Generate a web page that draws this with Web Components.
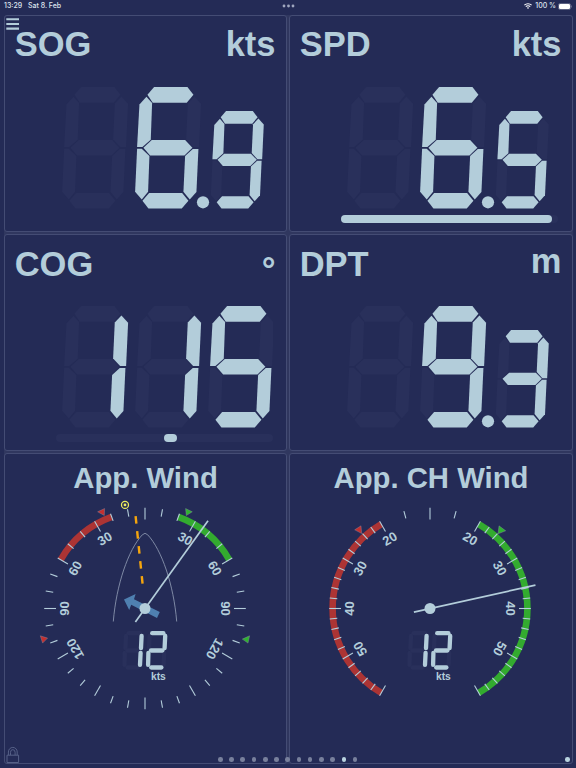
<!DOCTYPE html>
<html lang="en">
<head>
<meta charset="utf-8">
<title>Instruments</title>
<style>
    body {
        margin: 0;
        background: #242b56;
        font-family: "Liberation Sans", Arial, sans-serif;
        color: #b3cdda;
    }

    .lower { --label-top: 10px; }
</style>
</head>
<body>
<instrument-page>
    <status-bar slot="status" time="13:29" date="Sat 8. Feb" battery="100 %"></status-bar>
    <number-cell label="SOG" unit="kts" value=" 6.9"></number-cell>
    <number-cell label="SPD" unit="kts" value=" 6.5" bar="0 210.5"></number-cell>
    <number-cell class="lower" label="COG" unit="°" value="115" bar="108 12.5"></number-cell>
    <number-cell class="lower" label="DPT" unit="m" value=" 9.3"></number-cell>
    <wind-gauge label="App. Wind" mode="full" angle="35.7" speed="12"></wind-gauge>
    <wind-gauge label="App. CH Wind" mode="close" angle="77.5" speed="12"></wind-gauge>
    <page-dots slot="overlay" count="13" active="11"></page-dots>
</instrument-page>

<script>
class InstrumentPage extends HTMLElement {
    constructor() {
        super();
        this.attachShadow({ mode: 'open' });
    }

    connectedCallback() {
        this.shadowRoot.innerHTML = `
            <style>
                :host {
                    display: block;
                    position: relative;
                    width: 576px;
                    height: 768px;
                    overflow: hidden;
                }

                .grid {
                    display: grid;
                    grid-template-columns: 283px 284px;
                    grid-template-rows: 217px 217px 311px;
                    gap: 2px;
                    width: 569px;
                    margin: 0 0 0 4px;
                    background: #30375f;
                    border-radius: 3px;
                }

                .menu {
                    position: absolute;
                    left: 6px;
                    top: 18px;
                }

                .lock {
                    position: absolute;
                    left: 6px;
                    top: 746px;
                }
            </style>
            <slot name="status"></slot>
            <div class="grid"><slot></slot></div>
            <svg class="menu" width="13" height="12" viewBox="0 0 13 12" stroke="#b3cdda" stroke-width="2.1">
                <path d="M.3 1.2H13M.3 6H13M.3 10.6H13"/>
            </svg>
            <svg class="lock" width="14" height="18" viewBox="0 0 14 18" fill="none" stroke="#566087" stroke-width="1">
                <path d="M1 9.2h11.6v7.3H1zM2.4 9V6a4.4 4.6 0 0 1 8.8 0v3M4.5 9V6.3a2.3 2.6 0 0 1 4.6 0V9"/>
            </svg>
            <slot name="overlay"></slot>
        `;
    }
}

class StatusBar extends HTMLElement {
    constructor() {
        super();
        this.attachShadow({ mode: 'open' });
    }

    connectedCallback() {
        this.shadowRoot.innerHTML = `
            <style>
                :host {
                    display: grid;
                    grid-template-columns: 1fr auto 1fr;
                    align-items: center;
                    height: 15px;
                    padding: 0 4px;
                    box-sizing: border-box;
                    font: 500 7px/12px Inter, sans-serif;
                    color: #dfe4ee;
                }

                div {
                    display: flex;
                    align-items: center;
                    height: 12px;
                    margin-bottom: 3px;
                }

                .left { gap: 5.8px; }
                .right { justify-content: flex-end; gap: 2px; }
                .right span { margin-left: 1px; }
                svg { display: block; }
                .dots { margin-bottom: 3px; }
            </style>
            <div class="left"><span>${this.getAttribute('time')}</span><span>${this.getAttribute('date')}</span></div>
            <svg class="dots" width="13" height="4" fill="#a0a7bf">
                <circle cx="2" cy="2" r="1.4"/><circle cx="6.5" cy="2" r="1.4"/><circle cx="11" cy="2" r="1.4"/>
            </svg>
            <div class="right">
                <svg width="8" height="6" viewBox="0 0 8 6" fill="none" stroke="#fff" stroke-width="1.1">
                    <path d="M.4 2.2a5.1 5.1 0 0 1 7.2 0M1.8 3.7a3.1 3.1 0 0 1 4.4 0"/>
                    <path d="M4 6 2.9 4.8a1.6 1.6 0 0 1 2.2 0z" fill="#fff" stroke="none"/>
                </svg>
                <span>${this.getAttribute('battery')}</span>
                <svg width="14" height="7" viewBox="0 0 14 7">
                    <rect x=".4" y=".4" width="12.2" height="6.2" rx="1.9" fill="none" stroke="#8a91aa" stroke-width=".6"/>
                    <rect x="1" y="1" width="11" height="5" rx="1.3" fill="#fff"/>
                    <path d="M13.2 2.5v2" stroke="#8a91aa" stroke-width=".8"/>
                </svg>
            </div>
        `;
    }
}

// which segments are lit for each character
const LIT = {
    ' ': '',
    1: 'bc',
    2: 'abged',
    3: 'abgcd',
    5: 'afgcd',
    6: 'afgecd',
    9: 'abfgcd'
};

class SegmentDisplay extends HTMLElement {
    constructor() {
        super();
        this.attachShadow({ mode: 'open' });
    }

    // one digit is 198 x 364 units
    static shapes = {
        a: '37,23 57,0 157,0 175,23 155,47 53,47',
        b: '178,28 198,50 192,180 174,180 153,157 158,49',
        c: '173,186 190,186 184,315 164,337 145,314 150,207',
        d: '22,341 42,318 141,318 160,341 140,364 40,364',
        e: '6,185 20,185 43,207 39,314 20,337 0,314',
        f: '34,29 51,48 47,158 22,180 6,180 13,52',
        g: '25,182 50,159 150,159 172,182 148,205 45,205'
    };

    digit(char, x, y, scale) {
        const lit = LIT[char];
        const segments = Object.entries(SegmentDisplay.shapes).map(([name, points]) =>
            `<polygon class="${lit.includes(name) ? 'on' : 'off'}" points="${points}"/>`).join('');
        return `<g transform="translate(${x} ${y}) scale(${scale})">${segments}</g>`;
    }

    connectedCallback() {
        const value = this.getAttribute('value');
        const [whole, fraction] = value.split('.');
        let out = [...whole].map((char, i) => this.digit(char, 6.1 + i * 73, 0.1, 1 / 3)).join('');
        if (fraction) {
            out += `<circle class="on" cx="147" cy="115.3" r="6.1"/>`;
            out += this.digit(fraction, 154.8, 24.1, 0.2675);
        }

        this.shadowRoot.innerHTML = `
            <style>
                :host { display: block; }
                svg { display: block; }
                .on { fill: #b3cdda; }
                .off { fill: #29305b; }
            </style>
            <svg width="217" height="122" role="img" aria-label="${value.trim()}">${out}</svg>
        `;
    }
}

class NumberCell extends HTMLElement {
    constructor() {
        super();
        this.attachShadow({ mode: 'open' });
    }

    get bar() {
        if (!this.hasAttribute('bar')) return '';
        const [start, length] = this.getAttribute('bar').split(' ');
        return `<div class="track"><div class="fill" style="margin-left:${start}px;width:${length}px"></div></div>`;
    }

    connectedCallback() {
        const unit = this.getAttribute('unit');
        // the short units sit off the shared baseline
        const shift = { m: -3, '°': 6.3 }[unit] || 0;

        this.shadowRoot.innerHTML = `
            <style>
                :host {
                    display: flex;
                    flex-direction: column;
                    box-sizing: border-box;
                    border: 1px solid #444c74;
                    border-radius: 3px;
                    background: #242b56;
                }

                header {
                    display: flex;
                    justify-content: space-between;
                    height: 71px;
                    padding: var(--label-top, 9px) 10.5px 0 9.7px;
                    box-sizing: border-box;
                    font-size: 34.5px;
                    line-height: 38px;
                    font-weight: bold;
                }

                .unit { transform: translateY(${shift}px); }

                segment-display { margin-left: 51px; }

                .track {
                    width: 217px;
                    height: 7.6px;
                    margin: 6.4px 0 0 51px;
                    border-radius: 4px;
                    background: #29305b;
                }

                .fill {
                    height: 100%;
                    border-radius: 4px;
                    background: #b3cdda;
                }
            </style>
            <header>
                <span>${this.getAttribute('label')}</span>
                <span class="unit">${unit}</span>
            </header>
            <segment-display value="${this.getAttribute('value')}"></segment-display>
            ${this.bar}
        `;
    }
}

class WindGauge extends HTMLElement {
    constructor() {
        super();
        this.attachShadow({ mode: 'open' });
    }

    polar(angle, r) {
        const a = angle * Math.PI / 180;
        return [(r * Math.sin(a)).toFixed(2), (-r * Math.cos(a)).toFixed(2)];
    }

    arc(from, to, color) {
        const sweep = to > from ? 1 : 0;
        return `<path d="M${this.polar(from, 97.4)}A97.4 97.4 0 0 ${sweep} ${this.polar(to, 97.4)}" fill="none" stroke="${color}" stroke-width="6.6"/>`;
    }

    tick(angle, inner) {
        return `<path class="tick" d="M${this.polar(angle, inner)}L${this.polar(angle, 100.8)}"/>`;
    }

    label(angle, text) {
        return `<text class="num" transform="rotate(${angle}) translate(0 -76.1)">${text}</text>`;
    }

    scale() {
        const close = this.getAttribute('mode') === 'close';
        const [from, to] = close ? [30, 150] : [20, 60];
        let out = this.arc(-from, -to, '#ac3434') + this.arc(from, to, '#33ab2f');

        if (close) {
            out += this.tick(0, 89) + this.tick(15, 93.2) + this.tick(-15, 93.2);
            for (let a = 30; a <= 150; a += 6) {
                const inner = a % 30 ? 93.2 : 89;
                out += this.tick(a, inner) + this.tick(-a, inner);
            }
            [20, 30, 40, 50].forEach((n, i) => {
                out += this.label(30 + i * 30, n) + this.label(-30 - i * 30, n);
            });
        } else {
            for (let a = 0; a < 360; a += 10) {
                out += this.tick(a, a % 30 ? 93.2 : 89);
            }
            [30, 60, 90, 120].forEach(n => {
                out += this.label(n, n) + this.label(-n, n);
            });
        }
        return out;
    }

    markers() {
        if (this.getAttribute('mode') === 'close') {
            return `
                <path class="mark red" d="M-75.3-78.7-69-82.7-68.3-75z"/>
                <path class="mark green" d="M75.7-77.7 69-82.7 68-74.7z"/>`;
        }
        return `
            <path class="mark red" d="M-47.4-96.7-40.4-100-40.7-93z"/>
            <path class="mark green" d="M47.3-96.7 40.6-100 41.3-93z"/>
            <path class="mark red" d="M-104.7 27.3-97.4 29.6-102.4 34.6z"/>
            <path class="mark green" d="M104.6 27.3 97.3 30.6 103 34.6z"/>
            <circle cx="-20" cy="-103.6" r="3.5" fill="none" stroke="#ecec5e" stroke-width="1.3"/>
            <circle cx="-20" cy="-103.6" r="1.4" fill="#ecec5e"/>
            <path d="M-31.7 13C-28.7-23.7-16.7-58.7-2.7-73.7Q0-76.7 2.7-73.7C16.7-58.7 28.7-23.7 31.7 13" fill="none" stroke="#8893ad" stroke-width=".9"/>
            <path d="M-9.4-92.4-2.4-24.4" stroke="#f5a50e" stroke-width="2.4" stroke-dasharray="7.6 7.5"/>
            <path d="M-21-9-9.4-14.6-11-9.3 14.8 3.6 12 9.4-13.8-3.7-15.8 1.5z" fill="#4f80b0"/>`;
    }

    // small readout under the hub, segments drawn as round-capped strokes
    speed() {
        const lines = {
            a: 'M6.2 2.3H17.4',
            b: 'M19.2 5 18.6 17.2',
            c: 'M18.2 22 17.6 34',
            d: 'M5.2 36.6H15.4',
            e: 'M2.4 22 2.1 34',
            f: 'M3.6 5 3 17.2',
            g: 'M5 19.6H16.4'
        };
        return [...this.getAttribute('speed')].map((char, i) => {
            const paths = on => Object.keys(lines)
                .filter(name => LIT[char].includes(name) === on)
                .map(name => `<path class="${on ? 'on' : 'off'}" d="${lines[name]}"/>`).join('');
            return `<g transform="translate(${-22.6 + i * 23.6} 22.4)">${paths(false)}${paths(true)}</g>`;
        }).join('');
    }

    connectedCallback() {
        const angle = this.getAttribute('angle');

        this.shadowRoot.innerHTML = `
            <style>
                :host {
                    display: flex;
                    flex-direction: column;
                    align-items: center;
                    box-sizing: border-box;
                    border: 1px solid #444c74;
                    border-radius: 3px;
                    background: #242b56;
                }

                h2 {
                    height: 44px;
                    margin: 0;
                    padding-top: 7px;
                    box-sizing: border-box;
                    font-size: 29.3px;
                    line-height: 34px;
                    white-space: nowrap;
                }

                svg { display: block; overflow: visible; }
                text { font-weight: bold; text-anchor: middle; fill: #b3cdda; }
                .num { font-size: 13px; }
                .unit { font-size: 10.3px; }
                .tick { stroke: #b3cdda; stroke-width: 1.1; }
                .mark { stroke: #8a8fa6; stroke-width: .4; }
                .red { fill: #c42f2f; }
                .green { fill: #2fb32f; }
                .on, .off { fill: none; stroke-width: 4.3; stroke-linecap: round; }
                .on { stroke: #b3cdda; }
                .off { stroke: #29305b; }
            </style>
            <h2>${this.getAttribute('label')}</h2>
            <svg width="230" height="220" viewBox="-114 -110.5 230 220">
                ${this.scale()}
                ${this.markers()}
                ${this.speed()}
                <text class="unit" x="13.4" y="71.2">kts</text>
                <path d="M0 16.5V-108" transform="rotate(${angle})" stroke="#b3cdda" stroke-width="1.7"/>
                <circle r="5.5" fill="#b3cdda"/>
            </svg>
        `;
    }
}

class PageDots extends HTMLElement {
    constructor() {
        super();
        this.attachShadow({ mode: 'open' });
    }

    connectedCallback() {
        const count = Number(this.getAttribute('count'));
        const active = Number(this.getAttribute('active'));
        const dots = Array.from({ length: count }, (_, i) => `<i class="${i === active ? 'active' : ''}"></i>`).join('');

        this.shadowRoot.innerHTML = `
            <style>
                :host {
                    position: absolute;
                    left: 0;
                    right: 6px;
                    bottom: 6px;
                    display: flex;
                    justify-content: space-between;
                    padding-left: 218px;
                }

                div { display: flex; gap: 6.65px; }

                i {
                    width: 4.6px;
                    height: 4.6px;
                    border-radius: 50%;
                    background: #78809c;
                }

                .active { background: #b9d3df; }
            </style>
            <div>${dots}</div>
            <i class="active"></i>
        `;
    }
}

customElements.define('instrument-page', InstrumentPage);
customElements.define('status-bar', StatusBar);
customElements.define('segment-display', SegmentDisplay);
customElements.define('number-cell', NumberCell);
customElements.define('wind-gauge', WindGauge);
customElements.define('page-dots', PageDots);
</script>
</body>
</html>
